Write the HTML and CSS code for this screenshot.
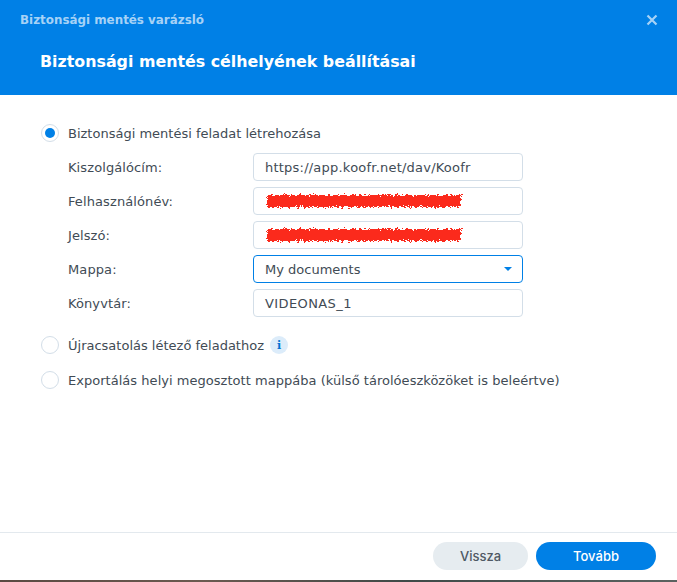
FILE: index.html
```html
<!DOCTYPE html>
<html lang="hu">
<head>
<meta charset="utf-8">
<title>Biztonsági mentés varázsló</title>
<link rel="stylesheet" href="styles.css">
</head>
<body>
<div class="dialog">
  <header class="head">
    <div class="titlebar">
      <span class="wintitle">Biztonsági mentés varázsló</span>
      <svg class="close" width="12" height="12" viewBox="0 0 12 12"><path d="M1.5 1.5l9 9M10.5 1.5l-9 9" stroke="#a6d2f6" stroke-width="2.2" fill="none"/></svg>
    </div>
    <h1 class="heading">Biztonsági mentés célhelyének beállításai</h1>
  </header>
  <main class="body">
    <div class="radio-row">
      <span class="radio checked"></span>
      <span class="radio-label">Biztonsági mentési feladat létrehozása</span>
    </div>
    <div class="form">
      <label class="lbl">Kiszolgálócím:</label>
      <div class="field url">https://app.koofr.net/dav/Koofr</div>
      <label class="lbl">Felhasználónév:</label>
      <div class="field redacted">
        <svg class="scribble" width="202" height="20" viewBox="0 0 202 20"><defs><filter id="rough" x="-5%" y="-40%" width="110%" height="180%"><feTurbulence type="fractalNoise" baseFrequency="0.45 0.7" numOctaves="3" seed="7"/><feDisplacementMap in="SourceGraphic" scale="7" xChannelSelector="R" yChannelSelector="G"/></filter></defs><rect x="3" y="4" width="194" height="12" fill="#fb2c1f" filter="url(#rough)"/></svg>
      </div>
      <label class="lbl">Jelszó:</label>
      <div class="field redacted">
        <svg class="scribble" width="202" height="20" viewBox="0 0 202 20"><rect x="3" y="4" width="194" height="12" fill="#fb2c1f" filter="url(#rough)"/></svg>
      </div>
      <label class="lbl">Mappa:</label>
      <div class="field select"><span>My documents</span><span class="caret"></span></div>
      <label class="lbl">Könyvtár:</label>
      <div class="field wide">VIDEONAS_1</div>
    </div>
    <div class="radio-row second">
      <span class="radio"></span>
      <span class="radio-label">Újracsatolás létező feladathoz</span>
      <span class="info">i</span>
    </div>
    <div class="radio-row third">
      <span class="radio"></span>
      <span class="radio-label long">Exportálás helyi megosztott mappába (külső tárolóeszközöket is beleértve)</span>
    </div>
  </main>
  <footer class="foot">
    <button class="btn ghost">Vissza</button>
    <button class="btn primary">Tovább</button>
  </footer>
</div>
<div class="desktop"></div>
</body>
</html>
```

FILE: styles.css
```css
* { box-sizing: border-box; }
html, body { margin: 0; padding: 0; height: 100%; }
body {
  width: 677px;
  height: 582px;
  overflow: hidden;
  display: flex;
  flex-direction: column;
  font-family: "DejaVu Sans", Verdana, sans-serif;
  font-size: 13px;
  color: #414b55;
  background: #fff;
}
.dialog { flex: 1; display: flex; flex-direction: column; min-height: 0; }
.head { height: 95px; background: #0080e6; padding: 0 19px 0 20px; flex: none; }
.titlebar { height: 40px; display: flex; align-items: center; justify-content: space-between; }
.wintitle { font-size: 11.9px; font-weight: 700; color: #a6d2f6; }
.heading { margin: 10px 0 0 20px; font-size: 15.85px; font-weight: 700; color: #fff; line-height: 24px; }
.body { flex: 1; padding: 28px 41px 0; }
.radio-row { display: flex; align-items: center; height: 20px; }
.radio { width: 18px; height: 18px; border-radius: 50%; border: 1px solid #d3dee8; background: #fff; flex: none; margin-right: 9px; position: relative; }
.radio.checked::after { content: ""; position: absolute; left: 3px; top: 3px; width: 10px; height: 10px; border-radius: 50%; background: #0080e6; }
.long { letter-spacing: .03px; }
.form { display: grid; grid-template-columns: 185px 270px; grid-auto-rows: 28px; row-gap: 6px; margin: 10px 0 0 27px; align-items: center; }
.lbl { letter-spacing: .1px; }
.field { height: 28px; border: 1px solid #d3dee8; border-radius: 4px; padding: 0 11px; display: flex; align-items: center; white-space: nowrap; background: #fff; }
.url { letter-spacing: .22px; }
.wide { letter-spacing: .4px; }
.redacted { padding: 0 10px; }
.scribble { display: block; }
.select { border-color: #0080e6; justify-content: space-between; padding-right: 10px; }
.caret { width: 0; height: 0; border-left: 4.5px solid transparent; border-right: 4.5px solid transparent; border-top: 4.5px solid #0080e6; }
.second { margin-top: 18px; }
.third { margin-top: 15px; }
.info { width: 18px; height: 18px; border-radius: 50%; background: #dcecfa; color: #0073d1; font-size: 11px; font-weight: 700; display: flex; align-items: center; justify-content: center; margin-left: 6px; font-family: "DejaVu Serif", serif; }
.foot { height: 48px; flex: none; border-top: 1px solid #e3e9ee; display: flex; justify-content: flex-end; align-items: flex-start; gap: 8px; padding: 9px 21px 0 0; }
.btn { height: 28px; border: 0; border-radius: 14px; font-family: "Inter", "DejaVu Sans", sans-serif; font-size: 13px; font-weight: 500; padding: 0; }
.ghost { width: 95px; background: #e6ecf0; color: #4f5964; }
.primary { width: 120px; background: #0080e6; color: #fff; }
.desktop { height: 2px; flex: none; background: linear-gradient(90deg, #5a4a42, #6b5a50 30%, #3f4a48 60%, #5b6260); }
```
